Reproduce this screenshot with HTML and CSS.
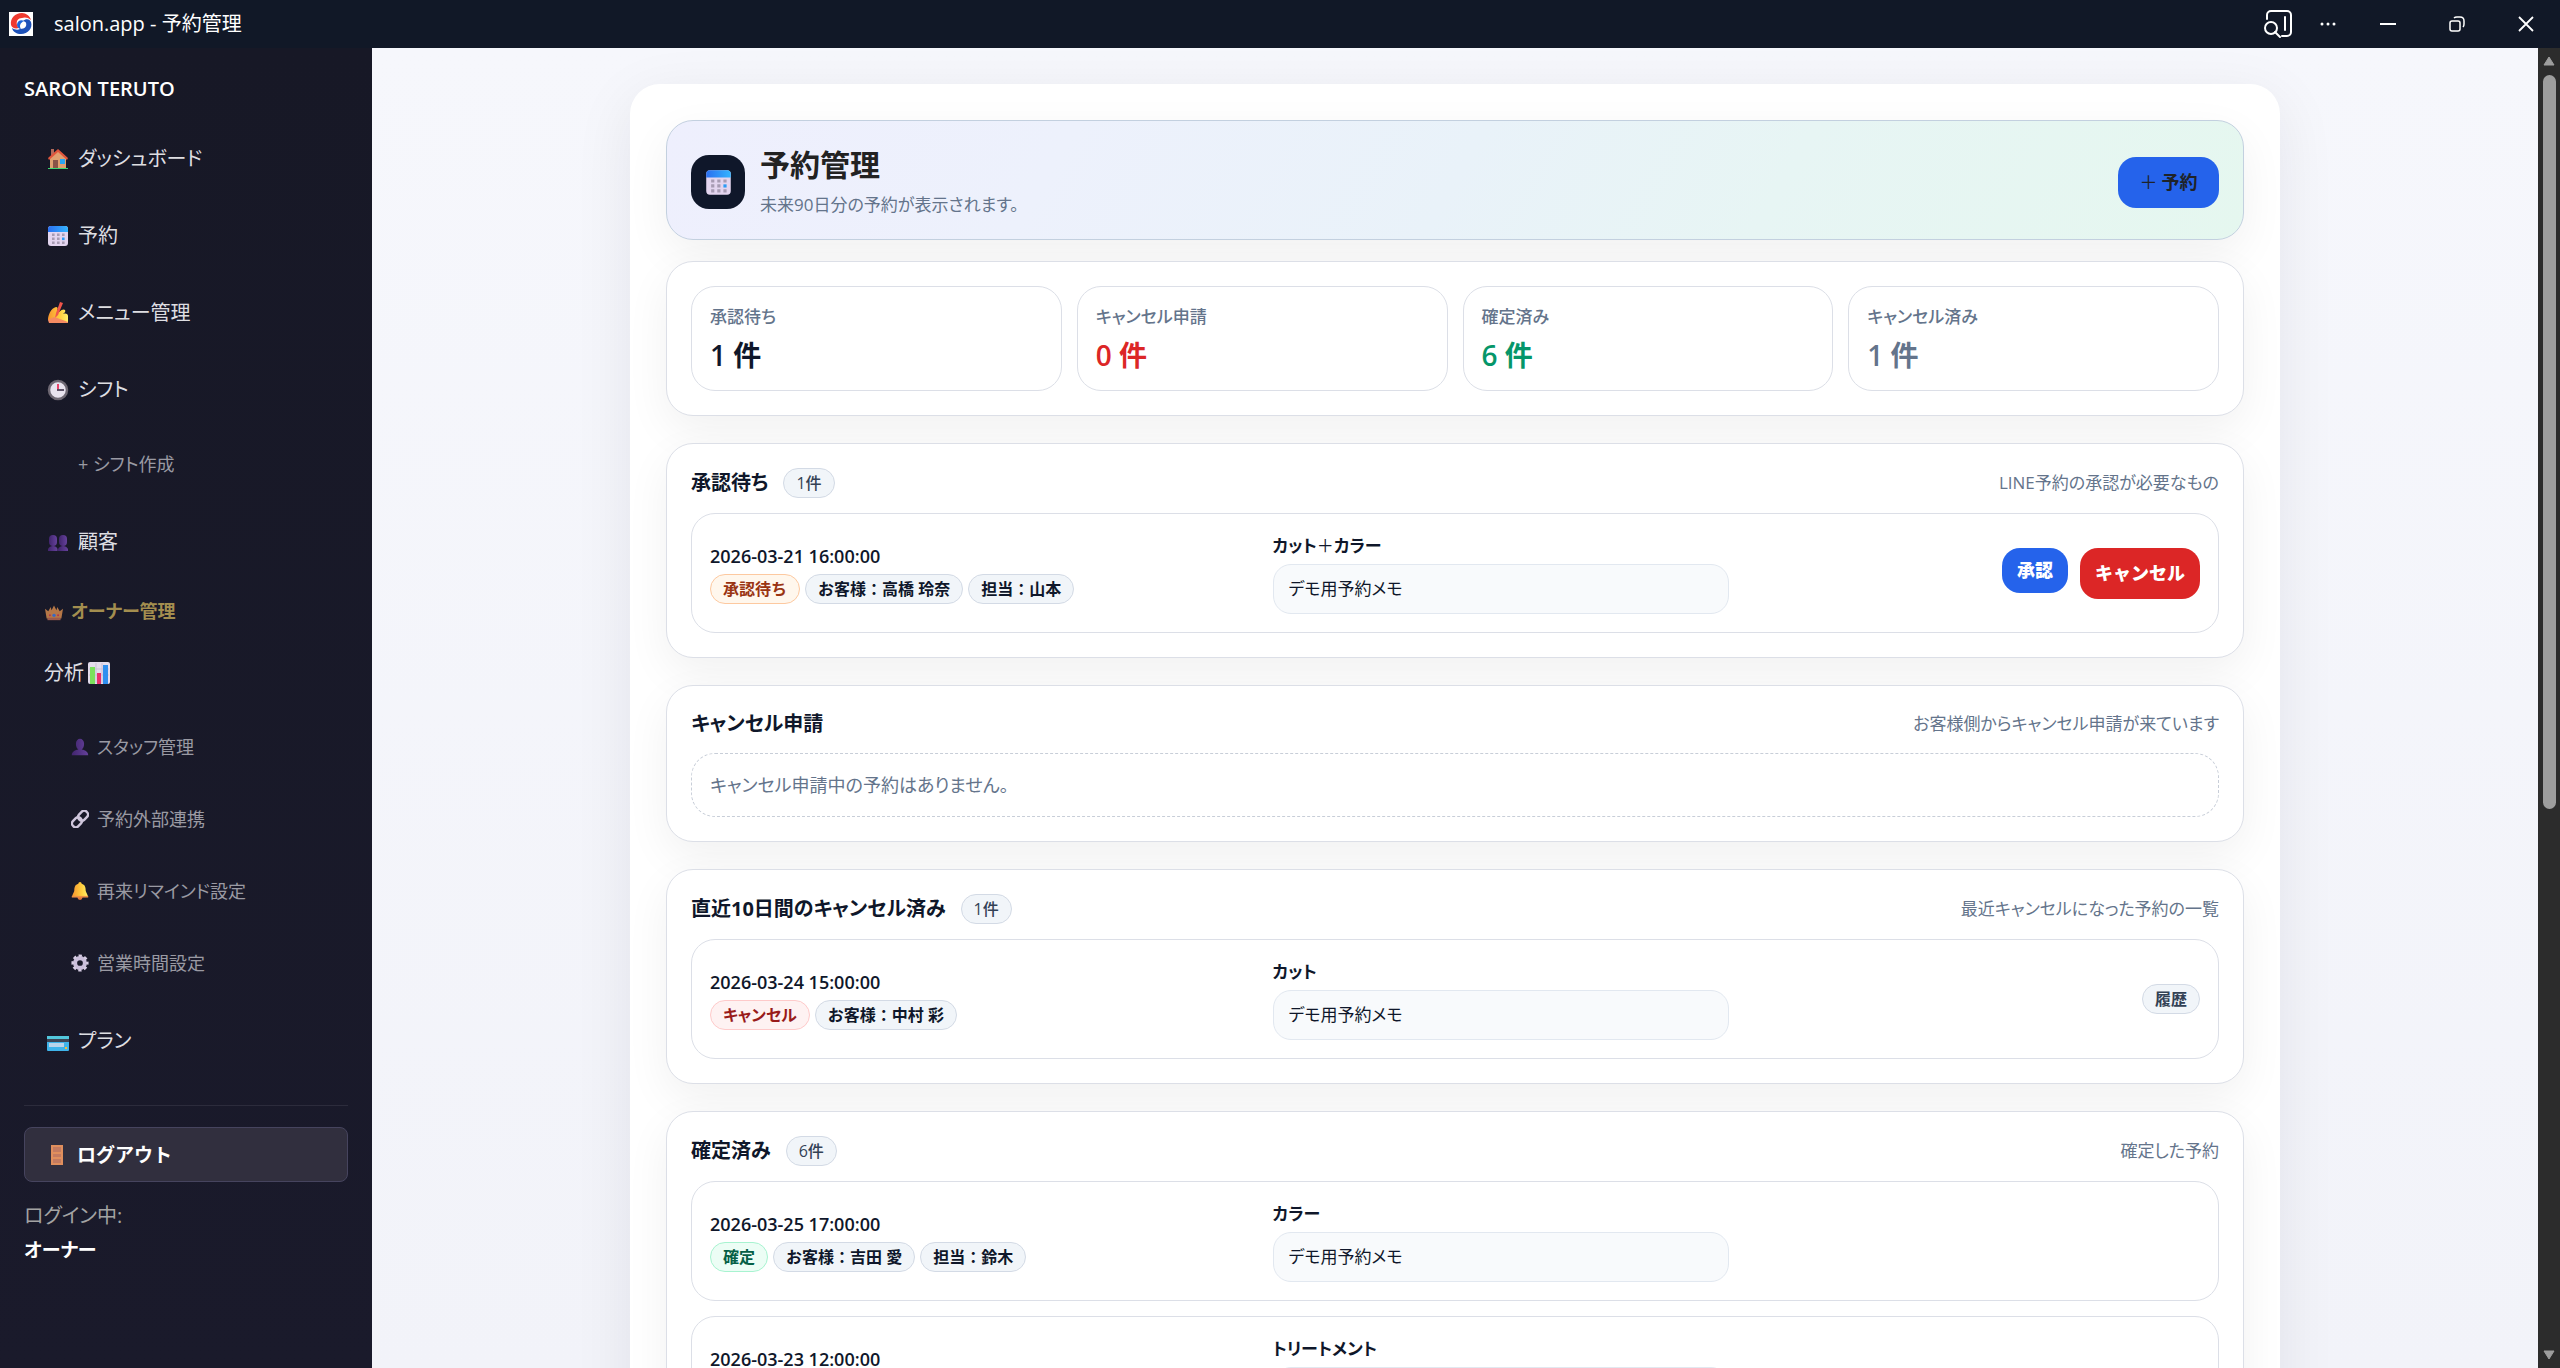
FILE: index.html
```html
<!DOCTYPE html>
<html lang="ja">
<head>
  <meta charset="utf-8">
  <title>salon.app - 予約管理</title>
  <link rel="stylesheet" href="styles.css">
</head>
<body>
  <svg class="sprite" aria-hidden="true">
    <defs>
      <linearGradient id="blueTop" x1="0" x2="1"><stop offset="0" stop-color="#2b6ff0"/><stop offset="1" stop-color="#34b4ff"/></linearGradient>
      <linearGradient id="gold" x1="0" x2="1"><stop offset="0" stop-color="#f7942e"/><stop offset=".6" stop-color="#ffcf3f"/><stop offset="1" stop-color="#fff06a"/></linearGradient>
      <linearGradient id="purple" x1="0" x2="1"><stop offset="0" stop-color="#41256e"/><stop offset="1" stop-color="#65419b"/></linearGradient>
    </defs>
    <symbol id="i-house" viewBox="0 0 22 22">
      <path d="M4 1h3v6H4z" fill="#b2695a"/>
      <path d="M3 9l8-7 8 7v11H3z" fill="#e0a070"/>
      <path d="M6 12h5v8H6z" fill="#8a5347"/>
      <path d="M13 11h5v5h-5z" fill="#2aa5f2"/>
      <path d="M11 1L1 10l1 2 9-8 9 8 1-2z" fill="#e0553c"/>
      <path d="M1 20h20v1H1z" fill="#3bd671"/>
    </symbol>
    <symbol id="i-calendar" viewBox="0 0 22 22">
      <rect x="1" y="1" width="20" height="20" rx="3" fill="#e3d5ef"/>
      <path d="M1 7V4a3 3 0 0 1 3-3h14a3 3 0 0 1 3 3v3z" fill="url(#blueTop)"/>
      <path d="M5 8.500h2.600v2.600H5zM10 8.500h2.600v2.600H10zM15 8.500h2.600v2.600H15zM5 12.500h2.600v2.600H5zM10 12.500h2.600v2.600H10zM5 16.500h2.600v2.600H5zM10 16.500h2.600v2.600H10zM15 16.500h2.600v2.600H15z" fill="#a79bb3"/>
      <path d="M15 12.500h2.600v2.600H15z" fill="#2d9bf5"/>
    </symbol>
    <symbol id="i-write" viewBox="0 0 22 22">
      <path d="M1 18c0-5 3-12 8-13 2 0 2 2 1 3l2 2c3-3 5-3 6-2 1 2-1 3-2 4 3-1 5 0 5 2v6c-4 1-9 0-12-1z" fill="url(#gold)"/>
      <path d="M13 0l3 1-5 12-3 3 1-5z" fill="#f1554a"/>
      <path d="M1 18l6-3 6 2 8 3v1H2z" fill="#f58b62"/>
    </symbol>
    <symbol id="i-clock" viewBox="0 0 22 22">
      <circle cx="11" cy="11" r="9" fill="#e8e3ee" stroke="#6e6873" stroke-width="2.500"/>
      <path d="M11 5v6" stroke="#e8436b" stroke-width="2"/>
      <path d="M10 11h7" stroke="#4f4458" stroke-width="1.800"/>
    </symbol>
    <symbol id="i-users" viewBox="0 0 22 22">
      <rect x="2" y="4" width="8" height="11" rx="4" fill="url(#purple)"/>
      <rect x="12" y="4" width="8" height="11" rx="4" fill="url(#purple)"/>
      <path d="M1 20v-2c1-2 3-3 5-3s4 1 4.500 3v2z" fill="url(#purple)"/>
      <path d="M11 20v-2c1-2 3-3 5-3s4 1 5 3v2z" fill="url(#purple)"/>
    </symbol>
    <symbol id="i-user" viewBox="0 0 22 22">
      <path d="M6 7a5 6 0 0 1 10 0c0 3-1 6-3 7 5 1 8 3 8 7H1c0-4 3-6 8-7-2-1-3-4-3-7z" fill="url(#purple)"/>
    </symbol>
    <symbol id="i-crown" viewBox="0 0 22 22">
      <path d="M0 7l4 3 3-5 1 4 3-6 3 6 1-4 3 5 4-3-2 12H2z" fill="#b57747"/>
      <path d="M3 18h16v3H3z" fill="#9b5a4c"/>
      <circle cx="11" cy="15" r="2" fill="#3569c9"/><circle cx="6" cy="15" r="1.200" fill="#b3314a"/><circle cx="16" cy="15" r="1.200" fill="#b3314a"/>
    </symbol>
    <symbol id="i-chart" viewBox="0 0 22 22">
      <rect x="0" y="0" width="22" height="22" rx="2" fill="#e4dcec"/>
      <path d="M1 7h20M1 13h20M8 1v20M14 1v20" stroke="#cabfd6"/>
      <path d="M2 5h5v17H2z" fill="#7be05c"/><path d="M9 11h4v11H9z" fill="#ea2f6c"/><path d="M15 3h5v19h-5z" fill="#2f8ff0"/>
    </symbol>
    <symbol id="i-link" viewBox="0 0 22 22">
      <g fill="none" stroke="#cfc6dc" stroke-width="3"><rect x="8" y="3" width="13" height="9" rx="4" transform="rotate(-45 14 7)"/><rect x="1" y="10" width="13" height="9" rx="4" transform="rotate(-45 8 15)"/></g>
    </symbol>
    <symbol id="i-bell" viewBox="0 0 22 22">
      <circle cx="11" cy="19" r="3" fill="#e0763b"/>
      <path d="M11 0c1 0 2 1 2 2 4 1 5 4 5 9 1 3 2 4 3 7H1c1-3 2-4 3-7 0-5 1-8 5-9 0-1 1-2 2-2z" fill="url(#gold)"/>
      <path d="M1 17h20v2H1z" fill="#ee9045"/>
    </symbol>
    <symbol id="i-gear" viewBox="0 0 22 22">
      <circle cx="11" cy="11" r="6" fill="none" stroke="#cbbfdb" stroke-width="5"/>
      <circle cx="11" cy="11" r="9" fill="none" stroke="#d6cce3" stroke-width="3" stroke-dasharray="4 3.070" stroke-dashoffset="2"/>
    </symbol>
    <symbol id="i-card" viewBox="0 0 22 22">
      <rect x="0" y="6" width="22" height="15" rx="1" fill="#3fb4ea"/>
      <path d="M0 6h22v3H0z" fill="#52c7dc"/>
      <path d="M0 9h22v3H0z" fill="#3d4555"/>
      <path d="M2 13h15v4H2z" fill="#b9d4ea"/><path d="M18 17h2v2h-2z" fill="#f2c13d"/>
    </symbol>
    <symbol id="i-door" viewBox="0 0 22 22">
      <path d="M5 1h12v20H5z" fill="#e08f5d"/>
      <path d="M7 3h8v5H7zM7 10h8v3H7zM7 15h8v4H7z" fill="#c47b60"/>
    </symbol>
  </svg>

  <header class="titlebar">
    <svg class="favicon" viewBox="0 0 24 24">
      <rect width="24" height="24" fill="#fff"/>
      <path d="M2 13C1 6 6 1 13 1c4 0 8 3 9 7-3-3-7-3-9-2-4 0-6 3-5 7 0 1 1 2 2 3-4 1-7 0-8-3z" fill="#ee3a2f"/>
      <path d="M22 10c2 6-3 12-10 12-4 0-8-2-9-6 3 2 6 2 8 1 5 0 7-3 6-6 0-1-2-2-3-2 3-3 7-2 8 1z" fill="#1d51b8"/>
      <path d="M15 9c-3-2-7 0-7 4 0 2 2 4 4 4-2-3-1-6 3-8z" fill="#1c64d8"/>
    </svg>
    <span class="titlebar-text">salon.app - 予約管理</span>
    <div class="window-buttons">
      <button type="button" aria-label="ページ内検索">
        <svg width="30" height="30" viewBox="0 0 30 30" fill="none" stroke="#fff" stroke-width="2" stroke-linecap="round"><path d="M4 10V6a4 4 0 0 1 4-4h16a4 4 0 0 1 4 4v17a4 4 0 0 1-4 4h-5"/><path d="M22 8v13"/><circle cx="8" cy="19" r="6"/><path d="M12 23l5 5"/></svg>
      </button>
      <button type="button" aria-label="その他">
        <svg width="16" height="16" viewBox="0 0 16 16" fill="#fff"><circle cx="2" cy="8" r="1.500"/><circle cx="8" cy="8" r="1.500"/><circle cx="14" cy="8" r="1.500"/></svg>
      </button>
      <button type="button" aria-label="最小化">
        <svg width="16" height="16" viewBox="0 0 16 16"><path d="M0 7h16v2H0z" fill="#fff"/></svg>
      </button>
      <button type="button" aria-label="元に戻す">
        <svg width="16" height="16" viewBox="0 0 16 16" fill="none" stroke="#fff" stroke-width="1.500"><rect x="1" y="5" width="10" height="10" rx="2"/><path d="M5 2q1-1 3-1h3q4 0 4 4v3q0 2-1 3"/></svg>
      </button>
      <button type="button" aria-label="閉じる">
        <svg width="16" height="16" viewBox="0 0 16 16"><path d="M1 1l14 14M15 1L1 15" stroke="#fff" stroke-width="1.800"/></svg>
      </button>
    </div>
  </header>

  <div class="app">
    <aside class="sidebar">
      <div class="brand">SARON TERUTO</div>
      <nav>
        <ul class="menu">
          <li><a href="#"><svg class="icon"><use href="#i-house"/></svg>ダッシュボード</a></li>
          <li><a href="#"><svg class="icon"><use href="#i-calendar"/></svg>予約</a></li>
          <li><a href="#"><svg class="icon"><use href="#i-write"/></svg>メニュー管理</a></li>
          <li><a href="#"><svg class="icon"><use href="#i-clock"/></svg>シフト</a>
            <ul class="submenu shift">
              <li><a href="#">+ シフト作成</a></li>
            </ul>
          </li>
          <li><a href="#"><svg class="icon"><use href="#i-users"/></svg>顧客</a></li>
          <li class="menu-label"><svg class="icon"><use href="#i-crown"/></svg>オーナー管理</li>
          <li><a class="analysis" href="#">分析<svg class="icon"><use href="#i-chart"/></svg></a>
            <ul class="submenu">
              <li><a href="#"><svg class="icon"><use href="#i-user"/></svg>スタッフ管理</a></li>
              <li><a href="#"><svg class="icon"><use href="#i-link"/></svg>予約外部連携</a></li>
              <li><a href="#"><svg class="icon"><use href="#i-bell"/></svg>再来リマインド設定</a></li>
              <li><a href="#"><svg class="icon"><use href="#i-gear"/></svg>営業時間設定</a></li>
            </ul>
          </li>
          <li><a href="#"><svg class="icon"><use href="#i-card"/></svg>プラン</a></li>
        </ul>
      </nav>
      <div class="sidebar-foot">
        <button class="logout" type="button"><svg class="icon"><use href="#i-door"/></svg>ログアウト</button>
        <div class="login-label">ログイン中:</div>
        <div class="login-name">オーナー</div>
      </div>
    </aside>

    <main class="main">
      <div class="page">
        <header class="hero">
          <div class="hero-icon"><svg class="icon"><use href="#i-calendar"/></svg></div>
          <div class="hero-text">
            <h1>予約管理</h1>
            <p>未来90日分の予約が表示されます。</p>
          </div>
          <button class="btn btn-add" type="button"><span class="plus">＋</span>予約</button>
        </header>

        <section class="panel summary">
          <div class="stat"><div class="stat-label">承認待ち</div><div class="stat-value">1 件</div></div>
          <div class="stat"><div class="stat-label">キャンセル申請</div><div class="stat-value red">0 件</div></div>
          <div class="stat"><div class="stat-label">確定済み</div><div class="stat-value green">6 件</div></div>
          <div class="stat"><div class="stat-label">キャンセル済み</div><div class="stat-value gray">1 件</div></div>
        </section>

        <section class="panel">
          <div class="panel-head">
            <h2>承認待ち</h2><span class="pill count">1件</span>
            <span class="panel-note">LINE予約の承認が必要なもの</span>
          </div>
          <div class="row">
            <div>
              <div class="date">2026-03-21 16:00:00</div>
              <div class="tags"><span class="pill wait">承認待ち</span><span class="pill">お客様：高橋 玲奈</span><span class="pill">担当：山本</span></div>
            </div>
            <div>
              <div class="menu-name">カット<span class="plus">＋</span>カラー</div>
              <div class="memo">デモ用予約メモ</div>
            </div>
            <div class="actions">
              <button class="btn btn-ok" type="button">承認</button>
              <button class="btn btn-cancel" type="button">キャンセル</button>
            </div>
          </div>
        </section>

        <section class="panel">
          <div class="panel-head">
            <h2>キャンセル申請</h2>
            <span class="panel-note">お客様側からキャンセル申請が来ています</span>
          </div>
          <div class="empty">キャンセル申請中の予約はありません。</div>
        </section>

        <section class="panel">
          <div class="panel-head">
            <h2>直近10日間のキャンセル済み</h2><span class="pill count">1件</span>
            <span class="panel-note">最近キャンセルになった予約の一覧</span>
          </div>
          <div class="row">
            <div>
              <div class="date">2026-03-24 15:00:00</div>
              <div class="tags"><span class="pill cancelled">キャンセル</span><span class="pill">お客様：中村 彩</span></div>
            </div>
            <div>
              <div class="menu-name">カット</div>
              <div class="memo">デモ用予約メモ</div>
            </div>
            <div class="actions"><span class="pill history">履歴</span></div>
          </div>
        </section>

        <section class="panel">
          <div class="panel-head">
            <h2>確定済み</h2><span class="pill count">6件</span>
            <span class="panel-note">確定した予約</span>
          </div>
          <div class="row">
            <div>
              <div class="date">2026-03-25 17:00:00</div>
              <div class="tags"><span class="pill fixed">確定</span><span class="pill">お客様：吉田 愛</span><span class="pill">担当：鈴木</span></div>
            </div>
            <div>
              <div class="menu-name">カラー</div>
              <div class="memo">デモ用予約メモ</div>
            </div>
            <div class="actions"></div>
          </div>
          <div class="row">
            <div>
              <div class="date">2026-03-23 12:00:00</div>
              <div class="tags"></div>
            </div>
            <div>
              <div class="menu-name">トリートメント</div>
              <div class="memo"></div>
            </div>
            <div class="actions"></div>
          </div>
        </section>
      </div>
    </main>

    <div class="scrollbar" aria-hidden="true">
      <svg width="12" height="10" viewBox="0 0 12 10"><path d="M6 1l5 8H1z" fill="#9e9e9e" stroke="#9e9e9e" stroke-linejoin="round"/></svg>
      <div class="track"><div class="thumb"></div></div>
      <svg width="12" height="10" viewBox="0 0 12 10"><path d="M6 9L1 1h10z" fill="#9e9e9e" stroke="#9e9e9e" stroke-linejoin="round"/></svg>
    </div>
  </div>
</body>
</html>
```
FILE: styles.css
```css
* {
  box-sizing: border-box;
}
body {
  margin: 0;
  height: 100vh;
  display: flex;
  flex-direction: column;
  overflow: hidden;
  font-family: "Open Sans", "Noto Sans CJK JP", sans-serif;
  font-size: 18px;
  line-height: 28px;
  font-feature-settings: "palt";
  color: #0f172a;
}
h1, h2, p, ul {
  margin: 0;
  padding: 0;
}
ul {
  list-style: none;
}
a {
  color: inherit;
  text-decoration: none;
}
button {
  font: inherit;
  font-feature-settings: inherit;
  border: 0;
}
.sprite {
  position: absolute;
  width: 0;
  height: 0;
}
.icon {
  width: 22px;
  height: 22px;
  flex: none;
}

/* window title bar */
.titlebar {
  flex: none;
  height: 48px;
  display: flex;
  align-items: center;
  background: #111827;
  color: #fff;
  padding: 0 26px 0 9px;
  font-size: 20px;
}
.favicon {
  width: 24px;
  height: 24px;
  margin-right: 21px;
}
.window-buttons {
  margin-left: auto;
  display: flex;
  align-items: center;
}
.window-buttons button {
  display: flex;
  padding: 0;
  margin-left: 53px;
  background: none;
}
.window-buttons button:nth-child(2) {
  margin-left: 27px;
}
.window-buttons button:nth-child(3) {
  margin-left: 44px;
}

.app {
  flex: 1;
  min-height: 0;
  display: flex;
}

/* sidebar */
.sidebar {
  flex: none;
  width: 372px;
  padding: 26px 24px;
  background: linear-gradient(#171826, #1a1a2b);
  color: #dedee2;
}
.brand {
  color: #fff;
  font-size: 20px;
  font-weight: 600;
  line-height: 30px;
  margin-bottom: 16px;
}
.menu a {
  display: flex;
  align-items: center;
  gap: 9px;
  padding: 24px 23px;
  font-size: 20px;
  line-height: 29px;
}
.menu a.analysis {
  gap: 4px;
  padding-left: 20px;
}
.submenu {
  padding-bottom: 3px;
}
.menu .submenu a {
  padding: 22px 47px;
  gap: 8px;
  font-size: 18px;
  line-height: 28px;
  color: #9a9aa3;
}
.menu .shift a {
  padding-left: 54px;
}
.submenu .icon,
.menu-label .icon {
  width: 18px;
  height: 18px;
}
.menu-label {
  display: flex;
  align-items: center;
  gap: 8px;
  padding: 19px 21px 10px;
  font-weight: 700;
  line-height: 25px;
  color: #a38e4f;
}
.sidebar-foot {
  margin-top: 26px;
  padding-top: 21px;
  border-top: 1px solid #2c2c3c;
}
.logout {
  display: flex;
  align-items: center;
  gap: 9px;
  width: 100%;
  height: 55px;
  padding: 0 21px;
  border: 1px solid #46445e;
  border-radius: 8px;
  background: #312f3e;
  color: #fff;
  font-size: 19px;
  font-weight: 700;
  font-feature-settings: normal;
}
.login-label {
  margin-top: 17px;
  font-size: 20px;
  line-height: 34px;
  color: #a3a3a3;
}
.login-name {
  font-size: 19px;
  font-weight: 700;
  line-height: 34px;
  color: #fff;
}

/* page */
.main {
  flex: 1;
  min-width: 0;
  overflow: hidden;
  padding: 36px;
  background: linear-gradient(#f6f7fc, #f2f3f9);
}
.page {
  max-width: 1650px;
  margin: 0 auto;
  padding: 36px;
  border-radius: 30px;
  background: #fff;
  box-shadow: 0 15px 60px rgba(15, 23, 42, .08);
}
.hero {
  display: flex;
  align-items: center;
  gap: 15px;
  height: 120px;
  padding: 4px 24px 0;
  margin-bottom: 21px;
  border: 1px solid #c3d0df;
  border-radius: 27px;
  background: linear-gradient(120deg, #eeeffd, #edf1fc 25%, #e9f2f9 50%, #e7f5f4 70%, #e5f7ef);
  box-shadow: 0 15px 45px rgba(0, 0, 0, .06);
}
.hero-icon {
  display: flex;
  align-items: center;
  justify-content: center;
  width: 54px;
  height: 54px;
  border-radius: 18px;
  background: #0f172a;
}
.hero-icon .icon {
  width: 27px;
  height: 27px;
}
.hero h1 {
  font-size: 30px;
  font-weight: 700;
  line-height: 46px;
  color: #222;
}
.hero p {
  font-size: 17px;
  line-height: 34px;
  color: #64748b;
}
.plus {
  font-weight: 400;
}
.btn {
  border-radius: 18px;
  color: #fff;
  font-weight: 900;
  font-feature-settings: normal;
  cursor: pointer;
}
.btn-add {
  display: flex;
  align-items: center;
  justify-content: center;
  gap: 4px;
  margin-left: auto;
  width: 101px;
  height: 51px;
  padding: 0;
  background: #2563eb;
  color: #1f2328;
  font-weight: 700;
}
.btn-ok {
  height: 45px;
  padding: 0 15px;
  background: #2563eb;
}
.btn-cancel {
  height: 51px;
  padding: 0 15px;
  background: #dc2626;
}

.panel {
  margin-bottom: 27px;
  padding: 24px;
  border: 1px solid #dcdfe7;
  border-radius: 27px;
  background: #fff;
  box-shadow: 0 15px 45px rgba(0, 0, 0, .06);
}
.summary {
  display: grid;
  grid-template-columns: repeat(4, 1fr);
  gap: 15px;
}
.stat {
  height: 105px;
  padding: 16px 18px;
  border: 1px solid #dcdfe7;
  border-radius: 24px;
}
.stat-label {
  font-size: 17px;
  font-weight: 500;
  color: #64748b;
}
.stat-value {
  margin-top: 4px;
  font-size: 28px;
  font-weight: 600;
  line-height: 40px;
}
.red { color: #dc2626; }
.green { color: #059669; }
.gray { color: #64748b; }

.panel-head {
  display: flex;
  align-items: center;
  gap: 15px;
  margin-bottom: 15px;
}
.panel-head h2 {
  font-size: 20px;
  font-weight: 700;
  line-height: 28px;
}
.panel-note {
  margin-left: auto;
  font-size: 17px;
  color: #64748b;
}
.row {
  display: grid;
  grid-template-columns: 6fr 5fr 5fr;
  align-items: center;
  gap: 15px;
  padding: 18px;
  border: 1px solid #dcdfe7;
  border-radius: 24px;
}
.row + .row {
  margin-top: 15px;
}
.date {
  font-weight: 600;
  margin-bottom: 4px;
}
.tags {
  display: flex;
  gap: 5px;
  min-height: 30px;
}
.pill {
  height: 30px;
  padding: 0 12px;
  border: 1px solid #d3dae5;
  border-radius: 15px;
  background: #f1f5f9;
  font-size: 16px;
  font-weight: 700;
  font-feature-settings: normal;
  line-height: 28px;
}
.count {
  font-weight: 500;
  color: #334155;
}
.wait {
  border-color: #fdc9a0;
  background: #fff7ed;
  color: #9a3412;
}
.cancelled {
  border-color: #fecaca;
  background: #fef2f2;
  color: #991b1b;
  font-feature-settings: "palt";
}
.fixed {
  border-color: #a7f3d0;
  background: #ecfdf5;
  color: #065f46;
}
.history {
  color: #334155;
}
.menu-name {
  font-size: 17px;
  font-weight: 700;
  margin-bottom: 4px;
}
.memo {
  height: 50px;
  padding: 0 15px;
  border: 1px solid #e2e8f0;
  border-radius: 18px;
  background: #f8fafc;
  font-size: 17px;
  line-height: 48px;
}
.actions {
  display: flex;
  justify-content: flex-end;
  align-items: flex-start;
  gap: 12px;
}
.empty {
  padding: 17px 18px;
  border: 1px dashed #c8ced8;
  border-radius: 24px;
  color: #64748b;
}

/* window scrollbar */
.scrollbar {
  flex: none;
  width: 22px;
  display: flex;
  flex-direction: column;
  align-items: center;
  padding: 8px 0;
  background: #2c2c2c;
}
.track {
  flex: 1;
  width: 13px;
  padding: 9px 0;
}
.thumb {
  height: 58%;
  border-radius: 7px;
  background: #9e9e9e;
}
```
